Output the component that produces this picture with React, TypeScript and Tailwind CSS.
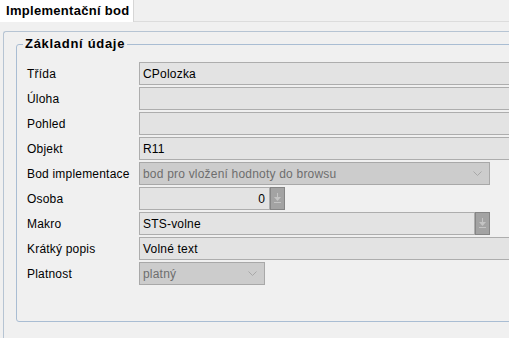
import React from 'react';

const Chevron: React.FC = () => (
  <svg width="9" height="5" viewBox="0 0 9 5" fill="none" stroke="#a8a8a8" strokeWidth="1">
    <polyline points="0.5 0.5 4.5 4.5 8.5 0.5" />
  </svg>
);

const SpinIcon: React.FC = () => (
  <svg width="7" height="11" viewBox="0 0 7 11" fill="#c4c4c4">
    <rect x="3" y="0" width="1" height="6" />
    <polygon points="0,4 7,4 3.5,8" />
    <rect x="0" y="9" width="7" height="1" />
  </svg>
);

const TextBox: React.FC<{ value?: string; className?: string }> = ({ value = '', className = 'flex-1' }) => (
  <div className={`h-[23px] border border-[#adadad] bg-[#e3e3e3] px-[3px] flex items-center text-black ${className}`}>
    {value}
  </div>
);

const Combo: React.FC<{ value: string; className: string }> = ({ value, className }) => (
  <div className={`h-[23px] border border-[#a8a8a8] bg-[#cccccc] pl-[3px] pr-[7px] flex items-center justify-between text-[#6e6e6e] ${className}`}>
    <span>{value}</span>
    <Chevron />
  </div>
);

const SpinButton: React.FC = () => (
  <div className="h-[23px] w-[15px] border border-[#858585] bg-[#a3a3a3] flex items-center justify-center">
    <SpinIcon />
  </div>
);

const Row: React.FC<{ label: string; children: React.ReactNode }> = ({ label, children }) => (
  <div className="flex items-center h-[23px]">
    <div className="w-[112px] shrink-0 text-black">{label}</div>
    <div className="flex-1 flex">{children}</div>
  </div>
);

export default function App() {
  return (
    <div className="w-[509px] h-[338px] bg-[#f0f0f0] overflow-hidden font-['Liberation_Sans',Arial,sans-serif] text-[12px] tracking-[0.2px]">
      {/* tab strip */}
      <div className="flex h-[22px]">
        <div className="w-[134px] bg-white border-r border-[#d6d6d6] flex items-center pl-[6px] font-bold text-[13px] tracking-[0.3px] text-black">
          Implementační bod
        </div>
        <div className="flex-1 border-b border-[#dcdcdc]" />
      </div>

      <div className="pt-[9px] pl-[3px]">
        <div className="border-l border-t border-[#b6c4d3] rounded-tl-[3px] pl-[12px] pt-[12px] h-[320px]">
          <div className="relative w-[520px] h-[278px] border border-[#a9bdd3] rounded-[3px] pl-[10px] pt-[17px]">
            <div className="absolute top-[-9px] left-[6px] bg-[#f0f0f0] px-[2px] font-bold text-[13px] tracking-[0.7px] text-black leading-[16px]">
              Základní údaje
            </div>

            <div className="flex flex-col gap-[2px]">
              <Row label="Třída">
                <TextBox value="CPolozka" />
              </Row>
              <Row label="Úloha">
                <TextBox />
              </Row>
              <Row label="Pohled">
                <TextBox />
              </Row>
              <Row label="Objekt">
                <TextBox value="R11" />
              </Row>
              <Row label="Bod implementace">
                <Combo value="bod pro vložení hodnoty do browsu" className="w-[351px]" />
              </Row>
              <Row label="Osoba">
                <div className="w-[131px] h-[23px] border border-[#adadad] bg-[#e3e3e3] flex items-center justify-end pr-[4px] text-black">
                  0
                </div>
                <SpinButton />
              </Row>
              <Row label="Makro">
                <TextBox value="STS-volne" className="w-[336px]" />
                <SpinButton />
              </Row>
              <Row label="Krátký popis">
                <TextBox value="Volné text" />
              </Row>
              <Row label="Platnost">
                <Combo value="platný" className="w-[126px]" />
              </Row>
            </div>
          </div>
        </div>
      </div>
    </div>
  );
}
